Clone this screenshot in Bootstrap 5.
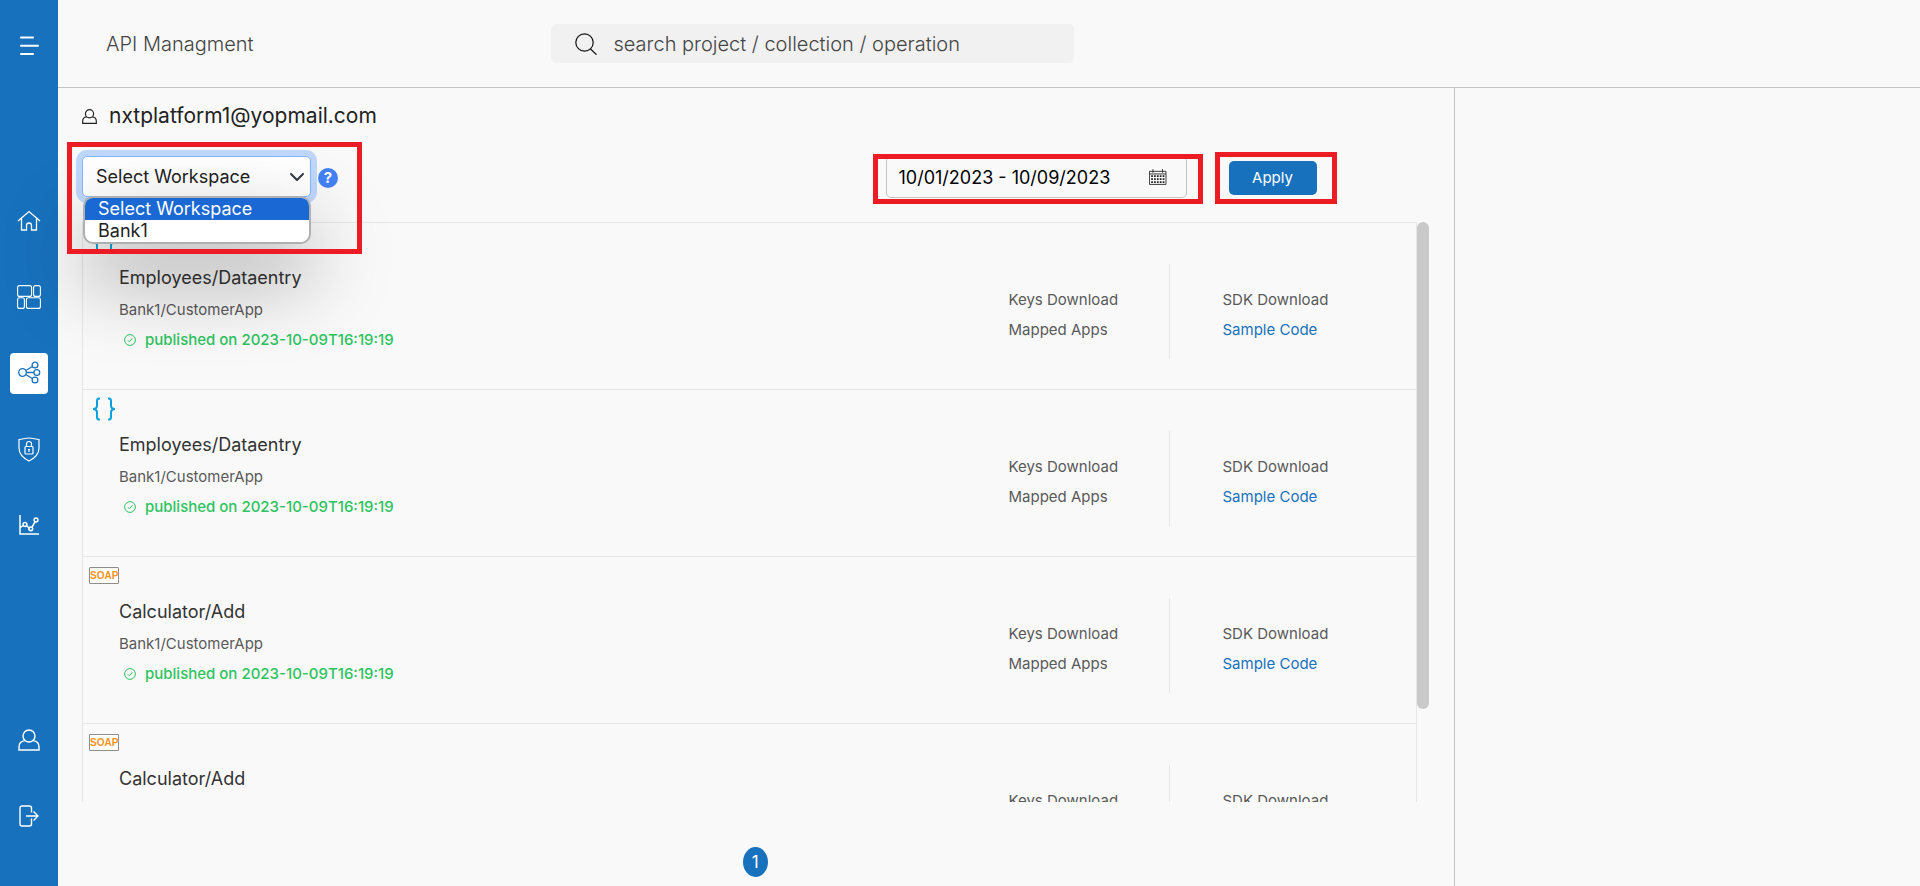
<!DOCTYPE html>
<html lang="en">
<head>
<meta charset="utf-8">
<meta name="viewport" content="width=device-width, initial-scale=1">
<title>API Managment</title>
<link href="https://cdn.jsdelivr.net/npm/bootstrap@5.3.0/dist/css/bootstrap.min.css" rel="stylesheet">
<style>
  :root { --brand: #1871bd; --line: #e6e6e6; --rule: #c4c4c4; --ink: #5a5a5a; --alert: #ed1c24; }
  body { font-family: Inter, "Open Sans", sans-serif; font-weight: 400; background: #f9f9f9; color: #222; }
  svg { display: block; fill: none; stroke: currentColor; }

  .side-rail { width: 58px; background: var(--brand); padding-bottom: 32px; }
  .side-rail a, .side-rail button { color: #fff; height: 76px; width: 58px; display: flex; align-items: center; justify-content: center; }
  .side-rail button { height: 92px; margin-bottom: 91px; background: none; border: 0; padding: 0; }
  .side-rail .tile { width: 38px; height: 41px; border-radius: 4px; background: #fff; color: var(--brand); display: flex; align-items: center; justify-content: center; }

  .top-bar { height: 88px; border-bottom: 1px solid var(--rule); }
  .top-bar h1 { font-size: 20px; line-height: 30px; font-weight: 300; color: #444; }
  .search-area { padding-left: 27px; }
  .search-box { max-width: 523px; height: 39px; border-radius: 5px; background: #f1f1f1; padding: 0 24px; gap: 17px; color: #111; }
  .search-box input { font-size: 20px; font-weight: 300; color: #444; }
  .search-box input::placeholder { color: #444; opacity: 1; }
  .bare-input { border: 0; outline: 0; background: none; padding: 0; min-width: 0; }

  .main-pane { border-right: 1px solid var(--rule); padding: 13px 25px 0 24px; }
  .account { font-size: 21px; line-height: 30px; gap: 12px; }
  .controls { margin: 25px 0 24px; height: 42px; }

  .marked { position: relative; }
  .marked::after { content: ""; position: absolute; border: 5px solid var(--alert); pointer-events: none; z-index: 30; }
  .mark-select::after { inset: -14px -51px -56px -15px; }
  .mark-date::after { inset: -2px -16px -6px -13px; }
  .mark-apply::after { inset: -9px -20px -9px -14px; }

  .ws-picker { width: 229px; }
  .ws-picker .form-select { font-size: 18px; font-weight: 400; line-height: 27px; height: 41px; padding: 6px 36px 6px 13px; border: 1px solid #86b7fe; border-radius: 5px; color: #222; background-color: #fff; box-shadow: 0 0 0 6px #bfd7fb; background-size: 16px; background-position: right 5px center; }
  .ws-menu { position: absolute; top: 40px; left: 1px; width: 228px; border: 2px solid #b0b0b0; border-radius: 10px; background: #fff; z-index: 20; box-shadow: 0 34px 80px rgba(0,0,0,.36); overflow: hidden; font-size: 18px; line-height: 22px; }
  .ws-menu li { padding: 0 13px; }
  .ws-menu .chosen { background: #1a68d4; color: #fff; }
  .help-dot { width: 20px; height: 20px; margin: 1px 0 0 7px; border: 0; padding: 0; border-radius: 50%; background: #4480f6; color: #fff; font-size: 15px; line-height: 20px; font-weight: 700; }

  .date-field { width: 301px; height: 42px; border: 1px solid var(--rule); border-radius: 5px; padding: 0 19px 0 12px; }
  .date-field input { font-size: 18px; font-weight: 400; color: #000; }
  .apply-btn { width: 88px; height: 34px; padding: 0; border: 0; border-radius: 5px; background: var(--brand); color: #fff; font-size: 15px; font-weight: 400; }
  .date-wrap { margin-right: 42px; }
  .apply-wrap { margin: 2px 112px 0 0; }

  .api-list { border-left: 1px solid var(--line); border-right: 1px solid var(--line); overflow: hidden; min-height: 0; }
  .api-row { height: 167px; border-top: 1px solid var(--line); }
  .kind { height: 45px; padding: 7px 0 0 9px; color: #0a9fdc; }
  .kind-soap { padding: 10px 0 0 6px; }
  .soap-tag { display: block; width: 30px; height: 17px; border: 1px solid #8e8e8e; border-radius: 1px; background: #fff; color: #f7941d; font: 700 10px/15px "Liberation Sans", sans-serif; text-align: center; }
  .api-info { padding-left: 36px; margin-top: -4px; }
  .api-info h2 { font-size: 18px; line-height: 27px; font-weight: 400; margin: 0 0 8px; color: #333; }
  .api-info p { font-size: 15px; line-height: 22px; margin: 0 0 8px; color: var(--ink); }
  .api-info .published { color: #2dc35f; font-weight: 500; gap: 9px; padding-left: 5px; }
  .links-col { margin-top: 41px; height: 95px; padding-top: 25px; width: 160px; font-size: 15px; line-height: 22px; }
  .links-col a { display: block; margin-bottom: 8px; color: var(--ink); text-decoration: none; }
  .links-col a.sample { color: var(--brand); }
  .sdk-col { width: 247px; padding-left: 53px; border-left: 1px solid var(--line); }
  .thumb-track { width: 12px; }
  .thumb { height: 84%; border-radius: 6px; background: #c9c9c9; }
  .pager { height: 84px; padding-top: 35px; }
  .page-dot { width: 25px; height: 30px; border-radius: 50%; background: var(--brand); color: #fff; font-size: 17px; line-height: 30px; text-align: center; text-decoration: none; }
</style>
</head>
<body>
<svg width="0" height="0" class="position-absolute" aria-hidden="true">
  <symbol id="person" viewBox="0 0 22 22"><circle cx="11" cy="7" r="6"/><path d="M7 11.600C3 12 1 14.500 1 18v3h20v-3c0-3.500-2-6-6-6.400"/></symbol>
  <symbol id="braces" viewBox="0 0 24 24"><path d="M8 1.500H7C5.500 1.500 5 2.500 5 4v4.500C5 11 3.500 12 1 12c2.500 0 4 1 4 3.500V20c0 1.500.5 2.500 2 2.500h1M16 1.500h1c1.500 0 2 1 2 2.500v4.500c0 2.500 1.500 3.500 4 3.500-2.500 0-4 1-4 3.500V20c0 1.500-.5 2.500-2 2.500h-1"/></symbol>
  <symbol id="tick" viewBox="0 0 12 12"><circle cx="6" cy="6" r="5.400"/><path d="M3.800 6.200l1.600 1.600 3-3.600"/></symbol>
</svg>

<div class="d-flex vh-100 overflow-hidden">
  <nav class="side-rail d-flex flex-column flex-shrink-0" aria-label="Main">
    <button type="button" aria-label="Toggle menu">
      <svg width="20" height="20" viewBox="0 0 20 20" stroke-width="2" stroke-linecap="round"><path d="M2 1.500h12M2 9.700h17M2 18h12"/></svg>
    </button>
    <a href="#" aria-label="Home"><svg width="24" height="22" viewBox="0 0 24 22" stroke-width="1.300"><path d="M1 11L12 1.500 23 11M4.500 8.500V20h5v-4.500a2.500 2.500 0 0 1 5 0V20h5V8.500"/></svg></a>
    <a href="#" aria-label="Dashboard"><svg width="24" height="24" viewBox="0 0 24 24" stroke-width="1.100"><rect x=".6" y=".6" width="14" height="10.800" rx="2"/><rect x="16.600" y=".6" width="6.800" height="10.800" rx="2"/><rect x=".6" y="12.800" width="6.800" height="10.600" rx="2"/><rect x="9.400" y="12.800" width="14" height="10.600" rx="2"/></svg></a>
    <a href="#" aria-label="APIs" aria-current="page"><span class="tile"><svg width="24" height="24" viewBox="0 0 24 24" stroke-width="1.300"><circle cx="5.500" cy="11.500" r="3.800"/><circle cx="18" cy="4" r="2.900"/><circle cx="19.800" cy="11.500" r="2.900"/><circle cx="18" cy="19" r="2.900"/><path d="M8.800 9.500l6.600-4M9.300 11.500h7.600M8.800 13.500l6.600 4"/></svg></span></a>
    <a href="#" aria-label="Security"><svg width="22" height="25" viewBox="0 0 22 25" stroke-width="1.200"><path d="M1 2.500C5 2 8 1 11 1s6 1 10 1.500V11c0 6-4 10-10 13C5 21 1 17 1 11z"/><rect x="7" y="9.500" width="8" height="7.500" rx="1"/><path d="M8.500 9.500V7a2.500 2.500 0 0 1 5 0v2.500M11 12v3M10 12.500h2"/></svg></a>
    <a href="#" aria-label="Analytics"><svg width="20" height="20" viewBox="0 0 20 20" stroke-width="1.500"><path d="M1 0v19h19M1.500 12.500L4 10.500M7.500 10.500l3 3M13 12l3-5"/><circle cx="6" cy="9.500" r="1.900"/><circle cx="11.800" cy="13.800" r="1.900"/><circle cx="17" cy="5" r="1.900"/></svg></a>
    <a href="#" class="mt-auto" aria-label="Profile"><svg width="22" height="22" stroke-width="1.400"><use href="#person"/></svg></a>
    <a href="#" aria-label="Log out"><svg width="20" height="22" viewBox="0 0 20 22" stroke-width="1.400"><path d="M12.500 7.500V3a2 2 0 0 0-2-2H3a2 2 0 0 0-2 2v16a2 2 0 0 0 2 2h7.500a2 2 0 0 0 2-2v-5.500M7 11h12M14.500 6.500L19 11l-4.500 4.500"/></svg></a>
  </nav>

  <div class="flex-grow-1 d-flex flex-column">
    <header class="top-bar d-flex align-items-center flex-shrink-0">
      <div class="col-3 ps-5"><h1 class="m-0">API Managment</h1></div>
      <div class="col search-area">
        <div class="search-box d-flex align-items-center">
          <svg width="22" height="22" viewBox="0 0 22 22" stroke-width="1.200"><circle cx="9.500" cy="9.500" r="8.700"/><path d="M15.500 16l6 5.700"/></svg>
          <input type="text" class="bare-input flex-grow-1" placeholder="search project / collection / operation" aria-label="Search">
        </div>
      </div>
    </header>

    <div class="d-flex flex-grow-1" style="min-height:0">
      <main class="main-pane col-9 d-flex flex-column">
        <div class="account d-flex align-items-center flex-shrink-0">
          <svg width="15" height="15" stroke-width="1.700"><use href="#person"/></svg>
          <span>nxtplatform1@yopmail.com</span>
        </div>

        <div class="controls d-flex flex-shrink-0">
          <div class="ws-picker marked mark-select">
            <select class="form-select" aria-label="Workspace">
              <option selected>Select Workspace</option>
              <option>Bank1</option>
            </select>
            <ul class="ws-menu list-unstyled m-0" role="listbox" aria-label="Workspace options">
              <li class="chosen" role="option" aria-selected="true">Select Workspace</li>
              <li role="option" aria-selected="false">Bank1</li>
            </ul>
          </div>
          <button type="button" class="help-dot align-self-center" aria-label="Help">?</button>
          <div class="ms-auto date-wrap marked mark-date">
            <div class="date-field d-flex align-items-center">
              <input type="text" class="bare-input flex-grow-1" value="10/01/2023 - 10/09/2023" aria-label="Date range">
              <svg width="20" height="18" viewBox="0 0 20 18" stroke-width="1"><path d="M.5 2.500h19v15H.5zM.5 5.500h19M4.500 0v4M15.500 0v4"/><path d="M2.500 8h15.500M2.500 11.500h15.500M2.500 15h15.500" stroke-width="2" stroke-dasharray="2 1.300"/></svg>
            </div>
          </div>
          <div class="apply-wrap marked mark-apply align-self-center"><button type="button" class="apply-btn d-block">Apply</button></div>
        </div>

        <div class="d-flex flex-grow-1" style="min-height:0">
          <section class="api-list flex-grow-1">
            <article class="api-row d-flex">
              <div class="flex-grow-1">
                <div class="kind"><svg width="24" height="24" stroke-width="2"><use href="#braces"/></svg></div>
                <div class="api-info"><h2>Employees/Dataentry</h2><p>Bank1/CustomerApp</p>
                  <p class="published d-flex align-items-center"><svg width="12" height="12"><use href="#tick"/></svg>published on 2023-10-09T16:19:19</p></div>
              </div>
              <div class="links-col"><a href="#">Keys Download</a><a href="#">Mapped Apps</a></div>
              <div class="links-col sdk-col"><a href="#">SDK Download</a><a href="#" class="sample">Sample Code</a></div>
            </article>
            <article class="api-row d-flex">
              <div class="flex-grow-1">
                <div class="kind"><svg width="24" height="24" stroke-width="2"><use href="#braces"/></svg></div>
                <div class="api-info"><h2>Employees/Dataentry</h2><p>Bank1/CustomerApp</p>
                  <p class="published d-flex align-items-center"><svg width="12" height="12"><use href="#tick"/></svg>published on 2023-10-09T16:19:19</p></div>
              </div>
              <div class="links-col"><a href="#">Keys Download</a><a href="#">Mapped Apps</a></div>
              <div class="links-col sdk-col"><a href="#">SDK Download</a><a href="#" class="sample">Sample Code</a></div>
            </article>
            <article class="api-row d-flex">
              <div class="flex-grow-1">
                <div class="kind kind-soap"><span class="soap-tag">SOAP</span></div>
                <div class="api-info"><h2>Calculator/Add</h2><p>Bank1/CustomerApp</p>
                  <p class="published d-flex align-items-center"><svg width="12" height="12"><use href="#tick"/></svg>published on 2023-10-09T16:19:19</p></div>
              </div>
              <div class="links-col"><a href="#">Keys Download</a><a href="#">Mapped Apps</a></div>
              <div class="links-col sdk-col"><a href="#">SDK Download</a><a href="#" class="sample">Sample Code</a></div>
            </article>
            <article class="api-row d-flex">
              <div class="flex-grow-1">
                <div class="kind kind-soap"><span class="soap-tag">SOAP</span></div>
                <div class="api-info"><h2>Calculator/Add</h2></div>
              </div>
              <div class="links-col"><a href="#">Keys Download</a></div>
              <div class="links-col sdk-col"><a href="#">SDK Download</a></div>
            </article>
          </section>
          <div class="thumb-track flex-shrink-0"><div class="thumb"></div></div>
        </div>

        <nav class="pager d-flex justify-content-center align-items-center flex-shrink-0" aria-label="Pages"><a href="#" class="page-dot" aria-current="page">1</a></nav>
      </main>
      <aside class="col-3"></aside>
    </div>
  </div>
</div>
<script src="https://cdn.jsdelivr.net/npm/bootstrap@5.3.0/dist/js/bootstrap.bundle.min.js"></script>
</body>
</html>
